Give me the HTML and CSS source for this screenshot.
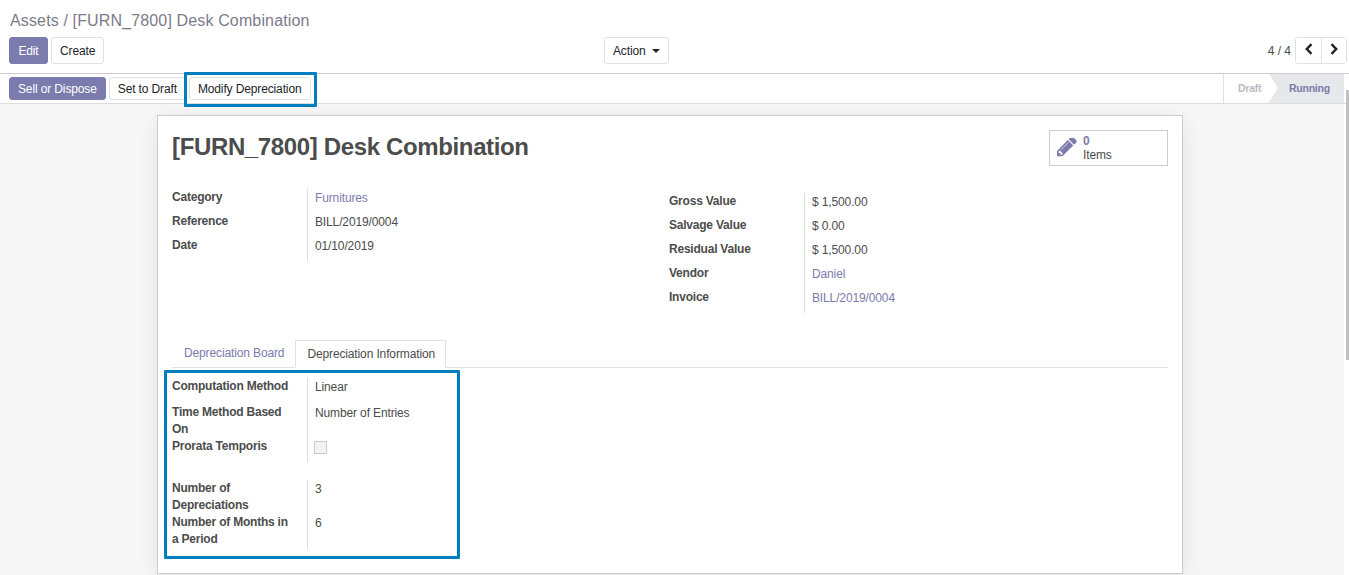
FILE: index.html
```html
<!DOCTYPE html>
<html>
	<head>
		<meta charset="UTF-8">
		<title>Assets</title>
		<link rel="stylesheet" href="styles.css">
	</head>
	<body>
		<div class="panel">
			<div class="crumbs">Assets / [FURN_7800] Desk Combination</div>
			<div class="panel-row">
				<div class="btns">
					<button class="btn primary edit">Edit</button>
					<button class="btn">Create</button>
				</div>
				<button class="btn action">Action <span class="caret"></span></button>
				<div class="pager">
					<span class="pager-text">4 / 4</span>
					<div class="pager-btns">
						<button class="pager-btn"><svg width="8" height="12" viewBox="0 0 8 12"><path d="M6.5 1.2 L1.8 6 L6.5 10.8" fill="none" stroke="#212529" stroke-width="2.4"/></svg></button>
						<button class="pager-btn"><svg width="8" height="12" viewBox="0 0 8 12"><path d="M1.5 1.2 L6.2 6 L1.5 10.8" fill="none" stroke="#212529" stroke-width="2.4"/></svg></button>
					</div>
				</div>
			</div>
		</div>
		<div class="statusbar">
			<div class="btns small">
				<button class="btn primary">Sell or Dispose</button>
				<button class="btn">Set to Draft</button>
				<button class="btn">Modify Depreciation</button>
			</div>
			<div class="states">
				<div class="state">Draft</div>
				<div class="state current">Running</div>
			</div>
			<div class="mark mark-btn"></div>
		</div>
		<div class="main">
			<div class="sheet">
				<div class="sheet-head">
					<h1>[FURN_7800] Desk Combination</h1>
					<div class="stat">
						<svg width="20" height="20" viewBox="0 0 1536 1536"><path fill="#7c7bad" d="M363 1280l91-91-235-235-91 91v107h128v128h107zm523-928q0-22-22-22-10 0-17 7l-542 542q-7 7-7 17 0 22 22 22 10 0 17-7l542-542q7-7 7-17zm-54-192l416 416-832 832h-416v-416zm683 96q0 53-37 90l-166 166-416-416 166-165q36-38 90-38 53 0 91 38l235 234q37 39 37 91z"/></svg>
						<div class="stat-text"><b>0</b><span>Items</span></div>
					</div>
				</div>
				<div class="groups">
					<div class="group">
						<div class="label">Category</div><div class="value link">Furnitures</div>
						<div class="label">Reference</div><div class="value">BILL/2019/0004</div>
						<div class="label">Date</div><div class="value">01/10/2019</div>
					</div>
					<div class="group right">
						<div class="label">Gross Value</div><div class="value">$ 1,500.00</div>
						<div class="label">Salvage Value</div><div class="value">$ 0.00</div>
						<div class="label">Residual Value</div><div class="value">$ 1,500.00</div>
						<div class="label">Vendor</div><div class="value link">Daniel</div>
						<div class="label">Invoice</div><div class="value link">BILL/2019/0004</div>
					</div>
				</div>
				<div class="tabs">
					<div class="tab">Depreciation Board</div>
					<div class="tab active">Depreciation Information</div>
				</div>
				<div class="tab-body">
					<div class="group tall">
						<div class="label gap">Computation Method</div><div class="value">Linear</div>
						<div class="label">Time Method Based On</div><div class="value">Number of Entries</div>
						<div class="label gap-sm">Prorata Temporis</div><div class="value"><span class="check"></span></div>
					</div>
					<div class="group tall second">
						<div class="label">Number of Depreciations</div><div class="value">3</div>
						<div class="label gap-end">Number of Months in a Period</div><div class="value">6</div>
					</div>
					<div class="mark mark-form"></div>
				</div>
			</div>
		</div>
		<div class="scrollbar"></div>
	</body>
</html>
```

FILE: styles.css
```css
html, body{
	height: 100%;
}
body{
	margin: 0;
	height: 575px;
	overflow: hidden;
	font-family: "Liberation Sans", Arial, sans-serif;
	font-size: 12px;
	line-height: 17px;
	letter-spacing: -.13px;
	color: #4c4c4c;
	background: #fff;
}
button{
	font-family: inherit;
	font-size: 12px;
	letter-spacing: inherit;
}

.panel{
	padding: 12px 2px 0 9px;
	height: 61px;
	border-bottom: 1px solid #ccc;
}
.crumbs{
	font-size: 16px;
	line-height: 18px;
	letter-spacing: .14px;
	padding-left: 1px;
	color: #7d7a8c;
}
.panel-row{
	display: grid;
	grid-template-columns: 595px auto 1fr;
	align-items: center;
	margin-top: 7px;
}
.btns{
	display: flex;
	gap: 3px;
}
.btn{
	height: 27px;
	padding: 0 8px;
	background: #fff;
	border: 1px solid #dee2e6;
	border-radius: 3px;
	color: #212529;
}
.btn.primary{
	background: #7c7bad;
	border-color: #7c7bad;
	color: #fff;
}
.btn.edit{
	width: 39px;
}
.caret{
	display: inline-block;
	margin-left: 3px;
	vertical-align: 2px;
	border-top: 4px solid #212529;
	border-left: 4px solid transparent;
	border-right: 4px solid transparent;
}
.pager{
	display: flex;
	align-items: center;
	justify-self: end;
	gap: 4px;
}
.pager-text{
	padding-top: 1px;
	letter-spacing: 0;
	color: #4c4c4c;
}
.pager-btns{
	display: flex;
	border: 1px solid #dee2e6;
	border-radius: 3px;
}
.pager-btn{
	width: 25px;
	height: 25px;
	padding: 0;
	border: 0;
	background: #fff;
}
.pager-btn + .pager-btn{
	border-left: 1px solid #dee2e6;
}

.statusbar{
	position: relative;
	display: flex;
	justify-content: space-between;
	align-items: center;
	height: 29px;
	padding: 0 5px 0 9px;
	border-bottom: 1px solid #ddd;
}
.small .btn{
	height: 23px;
}
.states{
	display: flex;
	align-self: stretch;
	font-size: 10.5px;
	letter-spacing: -.25px;
	font-weight: bold;
	border-left: 1px solid #dee2e6;
}
.state{
	display: flex;
	align-items: center;
	padding: 0 8px 0 14px;
	width: 45px;
	box-sizing: border-box;
	color: #b8bcc4;
	position: relative;
	z-index: 1;
}
.state::after{
	content: "";
	position: absolute;
	left: 45px;
	top: 0;
	border-left: 9px solid #fff;
	border-top: 14.5px solid transparent;
	border-bottom: 14.5px solid transparent;
}
.state.current{
	width: 75px;
	padding-left: 20px;
	background: #e6e8eb;
	color: #7c7bad;
	z-index: 0;
}
.state.current::after{
	display: none;
}

.mark{
	position: absolute;
	border: 3px solid #007fc0;
	border-radius: 1px;
	pointer-events: none;
}
.mark-btn{
	left: 184px;
	top: -2px;
	width: 127px;
	height: 29px;
}

.main{
	margin-right: 5px;
	height: 471px;
	padding-top: 11px;
	box-sizing: border-box;
	overflow: hidden;
	background-color: #f9f9f9;
	background-image: conic-gradient(#f4f4f4 25%, transparent 0 50%, #f4f4f4 0 75%, transparent 0);
	background-size: 4px 4px;
}
.sheet{
	width: 1026px;
	height: 459px;
	margin-left: 157px;
	padding: 0 14px;
	box-sizing: border-box;
	background: #fff;
	border: 1px solid #ccc;
	box-shadow: 0 5px 20px -1px rgba(0,0,0,.1);
}
.sheet-head{
	display: flex;
	justify-content: space-between;
	padding-top: 14px;
}
h1{
	margin: 0;
	padding-top: 1px;
	font-size: 24px;
	letter-spacing: -.36px;
	line-height: 32px;
	font-weight: bold;
	color: #4c4c4c;
}
.stat{
	display: flex;
	align-items: center;
	gap: 6px;
	width: 119px;
	height: 36px;
	padding-left: 7px;
	box-sizing: border-box;
	border: 1px solid #ccc;
}
.stat-text{
	display: flex;
	flex-direction: column;
	line-height: 14px;
}
.stat-text b{
	color: #7c7bad;
}

.groups{
	display: grid;
	grid-template-columns: 497px 1fr;
	margin-top: 23px;
}
.group{
	display: grid;
	grid-template-columns: 135px 300px;
	align-content: start;
}
.group.right{
	margin-top: 4px;
}
.label{
	font-weight: bold;
	letter-spacing: -.22px;
	padding-bottom: 7px;
	color: #4c4c4c;
}
.value{
	padding: 1px 0 6px 7px;
	border-left: 1px solid #ddd;
}
.link{
	color: #7c7bad;
}

.tabs{
	display: flex;
	margin-top: 27px;
	height: 27px;
	border-bottom: 1px solid #dee2e6;
}
.tab{
	padding: 5px 11px 0 12px;
	color: #7c7bad;
	box-sizing: border-box;
	height: 28px;
}
.tab.active{
	padding: 5px 10px 0 11px;
	color: #4c4c4c;
	background: #fff;
	border: 1px solid #dee2e6;
	border-bottom-color: #fff;
}

.tab-body{
	position: relative;
	padding-top: 10px;
}
.tall{
	width: 280px;
	grid-template-columns: 135px 145px;
}
.tall .label{
	padding: 0;
	width: 122px;
}
.tall .value{
	padding-top: 1px;
}
.tall .label.gap{
	width: auto;
	padding-bottom: 9px;
}
.tall .label.gap-sm{
	width: auto;
	padding-bottom: 7px;
}
.tall .label.gap-end{
	padding-bottom: 1px;
}
.second{
	margin-top: 18px;
}
.check{
	display: block;
	width: 11px;
	height: 11px;
	margin: 2px 0 0 -1px;
	background: #f3f3f3;
	border: 1px solid #ccc;
}
.mark-form{
	left: -8px;
	top: 2px;
	width: 290px;
	height: 183px;
}

.scrollbar{
	position: absolute;
	right: 0;
	top: 90px;
	width: 3px;
	height: 270px;
	background: #c1c1c1;
}
```
